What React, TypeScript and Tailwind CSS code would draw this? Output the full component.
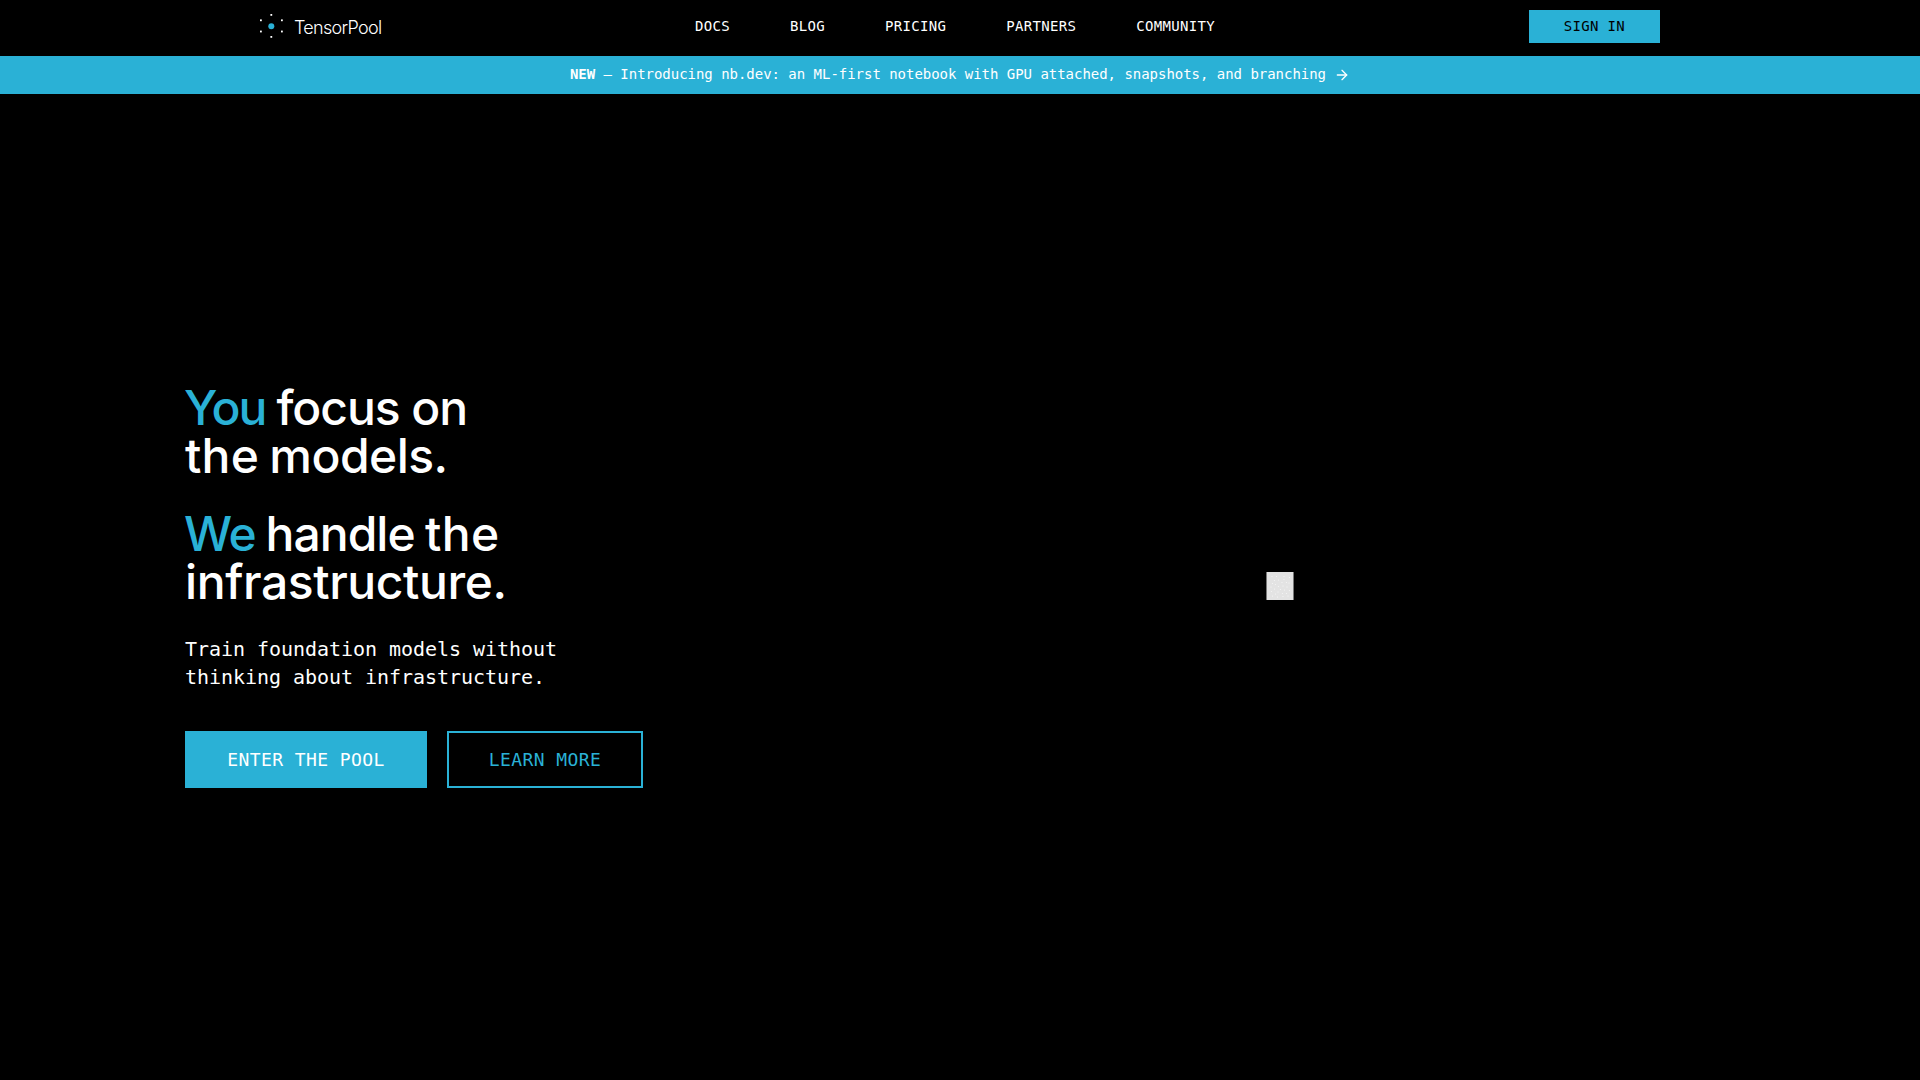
import { ArrowRight } from 'lucide-react';

const navLinks = ['Docs', 'Blog', 'Pricing', 'Partners', 'Community'];

// speckles on the pool tile, in tile pixels
const speckles = [
  [6, 4.5], [10.5, 4.5], [18, 4.5], [23.5, 5.5], [8.5, 8.5], [12.5, 8], [18, 7.5],
  [6.5, 11.5], [9.5, 12.5], [16, 10.5], [20.5, 10.5], [23, 11], [5, 15], [12.5, 14.5],
  [17, 14], [21, 15], [8.5, 17], [14.5, 17.5], [18.5, 18], [23.5, 18.5], [5.5, 19.5],
  [12, 20], [9.5, 22], [16.5, 21.5], [20.5, 21.5], [6.5, 24], [11.5, 25], [17, 24.5], [22, 24],
];

function Logo() {
  return (
    <a href="#" className="flex items-center">
      <svg width="24" height="26" viewBox="0 0 24 26">
        <circle cx="12.3" cy="13.2" r="3" fill="#2ab1d6" />
        <g fill="#fff">
          <rect x="11.4" y="1" width="1.8" height="1.8" />
          <rect x="11.4" y="23" width="1.8" height="1.8" />
          <rect x="1" y="6.4" width="1.8" height="1.8" />
          <rect x="22" y="6.4" width="1.8" height="1.8" />
          <rect x="1" y="17.6" width="1.8" height="1.8" />
          <rect x="22" y="17.6" width="1.8" height="1.8" />
        </g>
      </svg>
      <span className="ml-[11px] mt-1 font-[Inter,sans-serif] text-[18px] font-light leading-5 tracking-[-0.7px]">
        TensorPool
      </span>
    </a>
  );
}

function Header() {
  return (
    <header className="flex h-14 items-start justify-between pl-[259px] pr-[260px]">
      <div className="w-[436px] pt-[13px]">
        <Logo />
      </div>
      <nav className="flex flex-1 gap-[60px] pt-4 text-[14px] leading-5 tracking-[0.322px] uppercase">
        {navLinks.map((link) => (
          <a key={link} href="#">{link}</a>
        ))}
      </nav>
      <a
        href="#"
        className="mt-[10px] flex h-[33px] w-[131px] items-center justify-center bg-[#2ab1d6] text-[14px] tracking-[0.322px] text-black uppercase"
      >
        Sign In
      </a>
    </header>
  );
}

function Banner() {
  return (
    <a href="#" className="flex h-[38px] items-center justify-center bg-[#2ab1d6] text-[14px] tracking-[-0.028px]">
      <span className="pb-0.5 whitespace-pre">
        <strong className="font-bold">NEW</strong> — Introducing nb.dev: an ML-first notebook with GPU attached, snapshots, and branching
      </span>
      <ArrowRight className="ml-2 size-4" />
    </a>
  );
}

function Hero() {
  return (
    <main className="flex pt-[290px] pl-[185px]">
      <section className="w-[820px]">
        <h1 className="font-[Inter,sans-serif] text-[48px] font-medium leading-[48px] whitespace-nowrap">
          <span className="-ml-px block tracking-[-1.05px]">
            <span className="tracking-[-1.8px] text-[#2ab1d6]">You</span>
            <span className="tracking-[-2px]"> </span>focus on
          </span>
          <span className="block tracking-[-0.55px]">
            <span className="tracking-[0.2px]">the</span>
            <span className="tracking-[-2.5px]"> </span>models.
          </span>
          <span className="-ml-px mt-[30px] block tracking-[-0.96px]">
            <span className="tracking-[-1.3px] text-[#2ab1d6]">We</span>
            <span className="tracking-[-2.6px]"> </span>handle
            <span className="tracking-[-2.5px]"> </span>
            <span className="tracking-[0.4px]">the</span>
          </span>
          <span className="block tracking-[-0.4px]">infrastructure.</span>
        </h1>
        <p className="mt-[29px] text-[20px] leading-7 tracking-[-0.04px]">
          Train foundation models without
          <br />
          thinking about infrastructure.
        </p>
        <div className="mt-10 flex gap-5 text-[18px] tracking-[0.414px] uppercase">
          <a href="#" className="flex h-[57px] w-[242px] items-center justify-center bg-[#2ab1d6]">
            Enter the pool
          </a>
          <a
            href="#"
            className="flex h-[57px] w-[196px] items-center justify-center border-2 border-[#2ab1d6] text-[#2ab1d6]"
          >
            Learn more
          </a>
        </div>
      </section>
      <section className="pt-[188px] pl-[261px]">
        <svg width="28" height="28" viewBox="0 0 28 28">
          <rect width="28" height="28" fill="#777" />
          <rect x="1" width="26" height="28" fill="#e3e3e3" />
          {speckles.map(([x, y], idx) => (
            <circle key={idx} cx={x} cy={y} r="0.6" fill="#f6f6f6" />
          ))}
        </svg>
      </section>
    </main>
  );
}

export default function App() {
  return (
    <div className="h-screen overflow-hidden bg-black font-['DejaVu_Sans_Mono',monospace] text-white">
      <Header />
      <Banner />
      <Hero />
    </div>
  );
}
